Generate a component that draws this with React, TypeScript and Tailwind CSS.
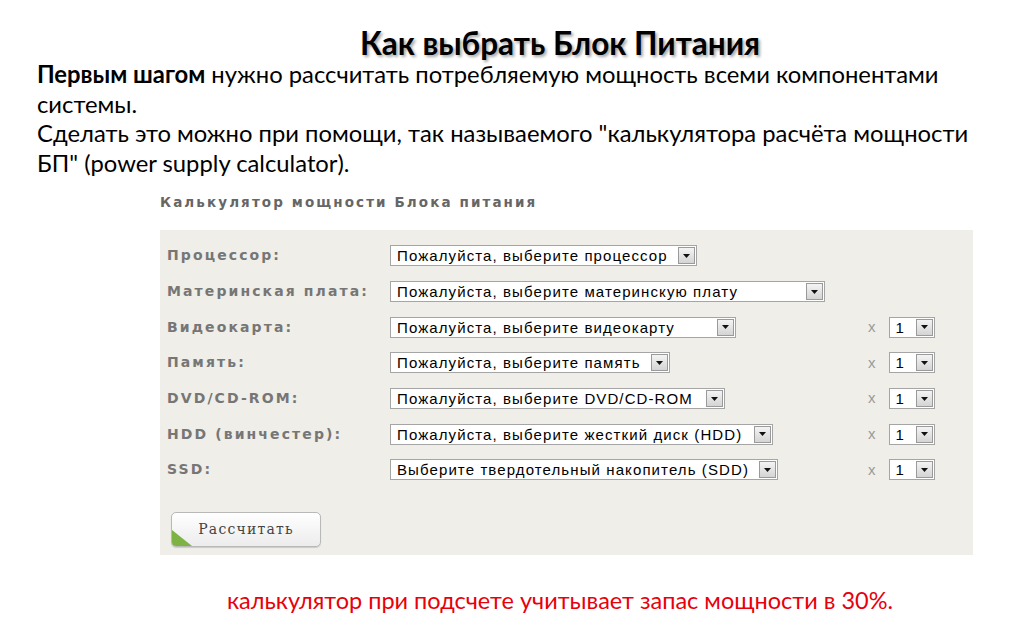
const rows = [
    { label: 'Процессор:', value: 'Пожалуйста, выберите процессор', width: 'w-[307px]', qty: false },
    { label: 'Материнская плата:', value: 'Пожалуйста, выберите материнскую плату', width: 'w-[435px]', qty: false },
    { label: 'Видеокарта:', value: 'Пожалуйста, выберите видеокарту', width: 'w-[346px]', qty: true },
    { label: 'Память:', value: 'Пожалуйста, выберите память', width: 'w-[280px]', qty: true },
    { label: 'DVD/CD-ROM:', value: 'Пожалуйста, выберите DVD/CD-ROM', width: 'w-[335px]', qty: true },
    { label: 'HDD (винчестер):', value: 'Пожалуйста, выберите жесткий диск (HDD)', width: 'w-[383px]', qty: true },
    { label: 'SSD:', value: 'Выберите твердотельный накопитель (SDD)', width: 'w-[388px]', qty: true },
];

const Arrow = () => (
    <span className="flex h-[17px] w-[17px] shrink-0 items-center justify-center border border-[#9a9a9a] bg-gradient-to-b from-[#f4f4f4] to-[#d4d4d4]">
        <svg width="7" height="4" viewBox="0 0 7 4">
            <path d="M0 0h7L3.5 4z" fill="#111" />
        </svg>
    </span>
);

const FakeSelect = ({ value, width }: { value: string; width: string }) => (
    <div className={`flex h-[21px] items-center justify-between border border-[#a5a5a5] bg-white pl-[6px] pr-[1px] ${width}`}>
        <span className="whitespace-nowrap font-['Liberation_Sans',sans-serif] text-[15px] leading-none tracking-[1.1px] text-black">{value}</span>
        <Arrow />
    </div>
);

const App = () => {
    return (
        <div className="h-[639px] w-[1024px] overflow-hidden bg-white font-['Lato','Noto_Sans',sans-serif]">
            {/* Title */}
            <h1 className="pl-[96px] pt-[26px] text-center text-[31.5px] font-bold leading-[34px] text-black [text-shadow:2px_2px_3px_rgba(0,0,0,0.35)]">
                Как выбрать Блок Питания
            </h1>

            {/* Intro text */}
            <div className="pl-[37px] pr-[40px] text-[23.8px] leading-[29.5px] text-black">
                <p><b>Первым шагом</b> нужно рассчитать потребляемую мощность всеми компонентами системы.</p>
                <p>Сделать это можно при помощи, так называемого "калькулятора расчёта мощности БП" (power supply calculator).</p>
            </div>

            {/* Calculator */}
            <div className="ml-[160px] mt-[16px] w-[813px] font-['DejaVu_Sans',sans-serif]">
                <div className="whitespace-nowrap text-[13.5px] font-bold leading-[16px] tracking-[2.1px] text-[#666]">Калькулятор мощности Блока питания</div>
                <div className="mt-[20px] bg-[#efeee8] pb-[8px] pl-[7px] pt-[8px]">
                    {rows.map((row) => (
                        <div key={row.label} className="flex h-[35.7px] items-center">
                            <span className="w-[223px] whitespace-nowrap text-[14px] font-bold tracking-[2.1px] text-[#767676]">{row.label}</span>
                            <div className="w-[478px]">
                                <FakeSelect value={row.value} width={row.width} />
                            </div>
                            {row.qty && (
                                <div className="flex items-center">
                                    <span className="font-['Liberation_Sans',sans-serif] text-[15px] text-[#9a9a9a]">x</span>
                                    <div className="ml-[13px] flex h-[21px] w-[46px] items-center justify-between border border-[#a5a5a5] bg-white pl-[6px] pr-[1px]">
                                        <span className="font-['Liberation_Sans',sans-serif] text-[15px] leading-none text-black">1</span>
                                        <Arrow />
                                    </div>
                                </div>
                            )}
                        </div>
                    ))}
                    <button className="relative ml-[4px] mt-[24px] flex h-[35px] w-[150px] items-center justify-center overflow-hidden rounded-[5px] border border-[#b9b9b9] bg-gradient-to-b from-white to-[#ececec] shadow-[0_1px_1px_rgba(0,0,0,0.15)]">
                        <span className="absolute bottom-0 left-0 h-0 w-0 border-b-[16px] border-r-[20px] border-b-[#7cb342] border-r-transparent" />
                        <span className="font-['DejaVu_Serif',serif] text-[14px] tracking-[1.2px] text-[#444]">Рассчитать</span>
                    </button>
                </div>
            </div>

            {/* Note */}
            <p className="mt-[30px] pl-[96px] text-center text-[23.5px] leading-[30px] text-[#e8000b]">
                калькулятор при подсчете учитывает запас мощности в 30%.
            </p>
        </div>
    );
};

export default App;
